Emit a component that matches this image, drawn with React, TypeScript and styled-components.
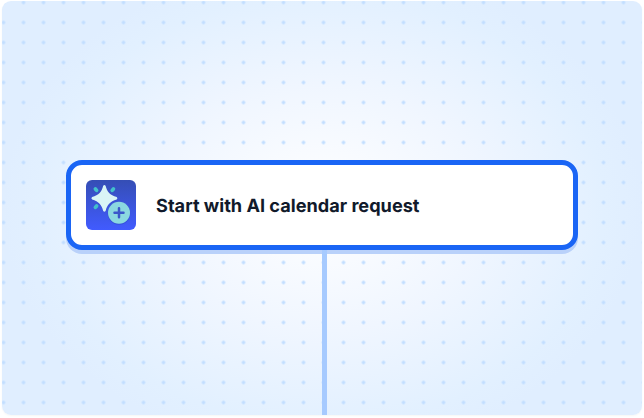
import React from 'react';
import styled, { createGlobalStyle } from 'styled-components';

const COLORS = {
  blue: '#1a65f5',
  line: '#a6caff',
  dot: '#c2deff',
  sky: '#e0eeff',
  text: '#111a2b',
  white: '#ffffff',
};

const GlobalStyle = createGlobalStyle`
  * {
    box-sizing: border-box;
  }

  body {
    margin: 0;
    background: ${COLORS.white};
    font-family: 'Inter', 'Liberation Sans', sans-serif;
  }
`;

const Page = styled.main`
  height: 418px;
  padding: 1px 2px 3px;
  overflow: hidden;
`;

const Canvas = styled.section`
  display: flex;
  flex-direction: column;
  align-items: center;
  height: 414px;
  padding-top: 159px;
  border-radius: 9px;
  overflow: hidden;
  background:
    radial-gradient(circle, ${COLORS.dot} 1.4px, rgba(194, 222, 255, 0) 2.1px) -8.5px -8.5px / 20px 20px,
    radial-gradient(ellipse 320px 246px at center, #ffffff 0%, #f0f6ff 50%, #e2f0ff 88%, ${COLORS.sky} 100%);
  box-shadow: 0 1px 2px rgba(20, 40, 20, 0.04);
`;

const StepCard = styled.div`
  display: flex;
  flex-shrink: 0;
  align-items: center;
  width: 512px;
  height: 90px;
  padding: 0 15px;
  border: 5px solid ${COLORS.blue};
  border-radius: 16px;
  background: ${COLORS.white};
  box-shadow: 0 4px 0 #b9d1fa;
`;

const StepTitle = styled.h2`
  margin: 2px 0 0 20px;
  color: ${COLORS.text};
  font-weight: 660;
  font-size: 18.15px;
  line-height: 25px;
  text-rendering: geometricPrecision;
  white-space: nowrap;
`;

const Connector = styled.div`
  flex: 1;
  width: 5px;
  margin-left: 5px;
  background: ${COLORS.line};
`;

const AiRequestIcon = () => (
  <svg width="50" height="50" viewBox="0 0 50 50" fill="none">
    <defs>
      <linearGradient id="tile" x1="25" y1="0" x2="25" y2="50" gradientUnits="userSpaceOnUse">
        <stop stopColor="#354eb5" />
        <stop offset="1" stopColor="#415bff" />
      </linearGradient>
    </defs>
    <rect width="50" height="50" rx="6" fill="url(#tile)" />
    <g stroke="#43c1ca" strokeWidth="3.7" strokeLinecap="round">
      <path d="M9.4 9l1.2 1.4" />
      <path d="M27.4 9l-1.2 1.4" />
      <path d="M9.4 27.4l1.2-1.4" />
    </g>
    <path
      d="M17.2 5.7Q18.4 4.2 19.6 5.7C21 11.6 24 15.1 30.7 17.1Q32.2 18.3 30.7 19.5C24 21.5 21 25 19.6 30.9Q18.4 32.4 17.2 30.9C15.8 25 12.8 21.5 6.1 19.5Q4.6 18.3 6.1 17.1C12.8 15.1 15.8 11.6 17.2 5.7Z"
      fill="#d9f4f6"
    />
    <circle cx="33" cy="33.5" r="11.2" fill="#263fae" fillOpacity="0.35" />
    <circle cx="33" cy="32.8" r="11" fill="#8bd8e0" />
    <path d="M33 28.3v9M28.5 32.8h9" stroke="#3a56ca" strokeWidth="2.5" strokeLinecap="round" />
  </svg>
);

const App = () => {
  return (
    <Page>
      <GlobalStyle />
      <Canvas>
        <StepCard>
          <AiRequestIcon />
          <StepTitle>Start with AI calendar request</StepTitle>
        </StepCard>
        <Connector />
      </Canvas>
    </Page>
  );
};

export default App;
